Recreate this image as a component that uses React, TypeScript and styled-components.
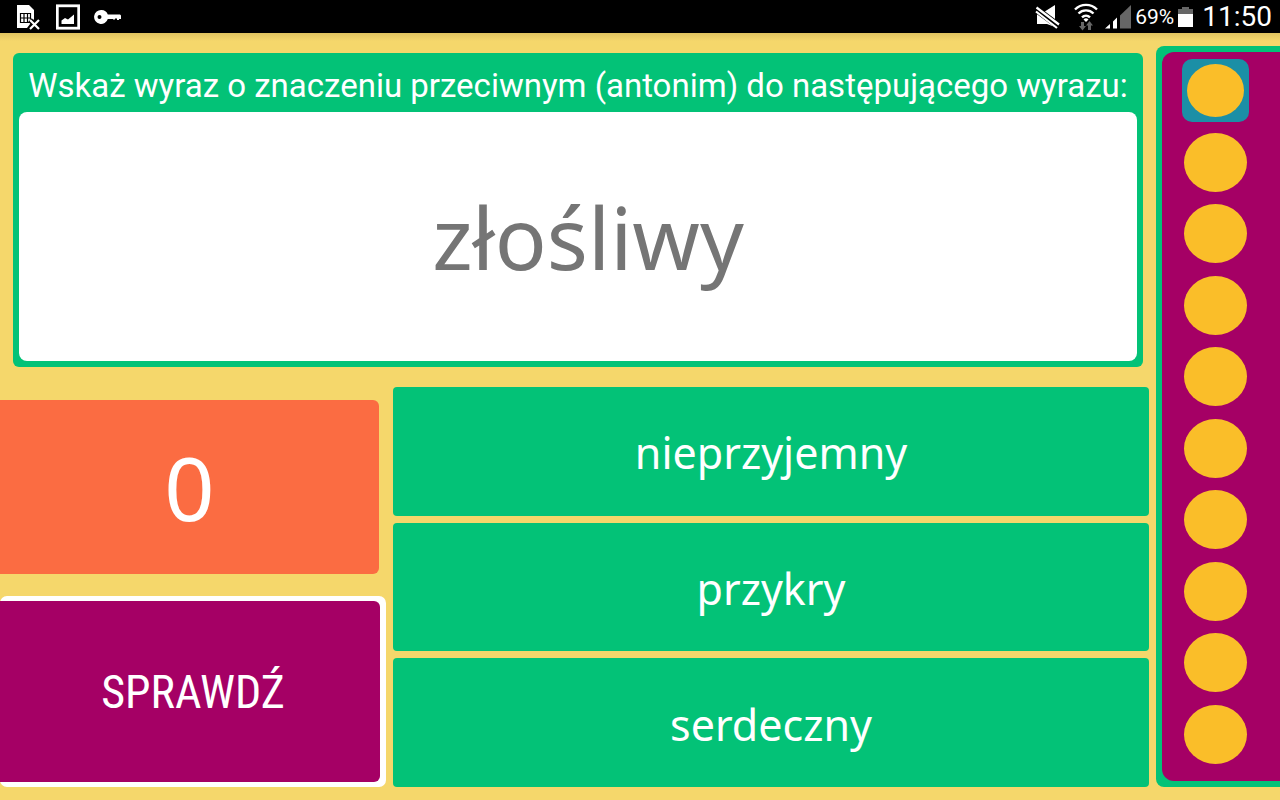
import React from "react";
import styled, { createGlobalStyle } from "styled-components";

const color = {
  sand: "#f5d76b",
  green: "#03c277",
  purple: "#a50065",
  orange: "#fb6c42",
  amber: "#fabe29",
  teal: "#1b8fa6",
  white: "#ffffff",
};

const wordFont = `"Noto Sans", "Open Sans", sans-serif`;

const GlobalStyle = createGlobalStyle`
  *, *::before, *::after { box-sizing: border-box; }
  body {
    margin: 0;
    background: ${color.sand};
    font-family: Roboto, sans-serif;
  }
  button { font: inherit; border: 0; padding: 0; cursor: pointer; }
`;

const Screen = styled.div`
  display: flex;
  flex-direction: column;
  min-height: 100vh;
`;

const StatusBar = styled.header`
  display: flex;
  align-items: center;
  justify-content: space-between;
  height: 33px;
  padding: 0 8px 0 16px;
  background: #000;
  color: ${color.white};
`;

const Notifications = styled.div`
  display: flex;
  align-items: center;
  gap: 14px;
`;

const Indicators = styled.div`
  display: flex;
  align-items: center;
`;

const Icon = styled.svg<{ $gap?: number }>`
  display: block;
  flex: none;
  margin-right: ${(p) => p.$gap ?? 0}px;
`;

const Charge = styled.span`
  margin-right: 4px;
  padding-top: 2px;
  font-size: 21px;
  line-height: 33px;
`;

const Clock = styled.time`
  font-size: 28px;
  line-height: 33px;
`;

const Game = styled.main`
  flex: 1;
  display: grid;
  grid-template-columns: minmax(0, 1fr) 124px;
  padding: 13px 0;
  background: linear-gradient(#dfc35f, ${color.sand} 8px);
`;

const Board = styled.div`
  display: grid;
  grid-template-columns: minmax(0, 1fr);
  grid-template-rows: 314fr 400fr;
  gap: 20px;
  padding-top: 7px;
`;

const Question = styled.section`
  display: flex;
  flex-direction: column;
  margin: 0 13px;
  padding: 6px;
  border-radius: 6px;
  background: ${color.green};
`;

const Prompt = styled.h1`
  margin: 0;
  min-height: 53px;
  color: ${color.white};
  font-size: 33px;
  font-weight: 400;
  line-height: 53px;
  text-align: center;
`;

const Word = styled.p`
  flex: 1;
  display: flex;
  align-items: center;
  justify-content: center;
  margin: 0;
  padding-left: 20px;
  border-radius: 8px;
  background: ${color.white};
  color: #757575;
  font-family: ${wordFont};
  font-size: 86px;
  line-height: 100px;
`;

const Controls = styled.div`
  display: grid;
  grid-template-columns: 386fr 756fr;
  gap: 7px;
  padding-right: 7px;
`;

const Side = styled.div`
  display: grid;
  grid-template-rows: 174fr 191fr;
  gap: 22px;
  padding-top: 13px;
`;

const Score = styled.output`
  display: flex;
  align-items: center;
  justify-content: center;
  margin-right: 7px;
  border-radius: 0 6px 6px 0;
  background: ${color.orange};
  color: ${color.white};
  font-family: ${wordFont};
  font-size: 88px;
  line-height: 100px;
`;

const CheckButton = styled.button`
  display: flex;
  padding: 5px 6px 5px 0;
  border-radius: 7px;
  background: ${color.white};
`;

const CheckLabel = styled.span`
  flex: 1;
  align-self: stretch;
  display: flex;
  align-items: center;
  justify-content: center;
  padding-left: 6px;
  border-radius: 0 6px 6px 0;
  background: ${color.purple};
  color: ${color.white};
  font-family: "Roboto Condensed", "Liberation Sans Narrow", sans-serif;
  font-size: 46px;
  line-height: 60px;
`;

const Answers = styled.div`
  display: grid;
  grid-auto-rows: 1fr;
  gap: 7px;
`;

const Answer = styled.button`
  border-radius: 4px;
  background: ${color.green};
  color: ${color.white};
  && {
    padding-top: 4px;
    font-family: ${wordFont};
    font-size: 43px;
    line-height: 60px;
  }
`;

const Track = styled.aside`
  display: flex;
  padding: 6px 0 6px 6px;
  border-radius: 8px 0 0 8px;
  background: ${color.green};
`;

const Rounds = styled.ol`
  flex: 1;
  display: flex;
  flex-direction: column;
  margin: 0;
  padding: 3px 11px 11px 0;
  border-radius: 12px 0 0 12px;
  background: ${color.purple};
  list-style: none;
`;

const Round = styled.li`
  flex: 1;
  display: flex;
  align-items: center;
  justify-content: center;
`;

const Dot = styled.span`
  width: 63px;
  height: 59px;
  border-radius: 50%;
  background: ${color.amber};
`;

const CurrentFrame = styled.span`
  display: flex;
  padding: 5px;
  border-radius: 10px;
  background: ${color.teal};

  ${Dot} {
    width: 57px;
    height: 53px;
  }
`;

const SimMissing = () => (
  <Icon width="26" height="26" viewBox="0 0 26 26" aria-hidden="true">
    <path d="M1 1h12l5 5v9l-7 9H1z" fill="#fff" />
    <path d="M4.500 9.500h10v9h-10zM4 14h11M8 9v10M11.500 9v10" fill="none" stroke="#000" strokeWidth="1.2" />
    <path d="M14 16l9 9M23 16l-9 9" stroke="#000" strokeWidth="5" />
    <path d="M14 16l9 9M23 16l-9 9" stroke="#fff" strokeWidth="2.2" />
  </Icon>
);

const Picture = () => (
  <Icon width="24" height="26" viewBox="0 0 24 26" aria-hidden="true">
    <rect x="1.3" y="1.8" width="21.4" height="22.4" fill="none" stroke="#fff" strokeWidth="2.8" />
    <path d="M5.500 20v-3.500l3.500-2.500 3 1.500 6-5V20z" fill="#fff" />
  </Icon>
);

const Key = () => (
  <Icon width="28" height="16" viewBox="0 0 28 16" aria-hidden="true">
    <path
      fillRule="evenodd"
      fill="#fff"
      d="M7.500 1a7 7 0 0 1 6.300 4.500H26l1 1v3.500h-2v1h-2v-1.500h-2v1h-2V10h-5.200A7 7 0 1 1 7.500 1zM5.500 6a2 2 0 1 0 0 4a2 2 0 0 0 0-4z"
    />
  </Icon>
);

const Muted = () => (
  <Icon $gap={13} width="26" height="26" viewBox="0 0 26 26" aria-hidden="true">
    <path d="M2 8h7l11-7v22l-8-3H2z" fill="#fff" />
    <path d="M0 4.300l24 18" stroke="#000" strokeWidth="7" />
    <path d="M1.500 3.500L24 20.500M1 7.500l21 16.500" stroke="#fff" strokeWidth="2.200" />
  </Icon>
);

const Wifi = () => (
  <Icon $gap={7} width="24" height="28" viewBox="0 0 24 28" aria-hidden="true">
    <path
      d="M1 6.500a15.500 15.500 0 0 1 22 0M4.500 10.500a10.600 10.600 0 0 1 15 0M8 14.300a5.800 5.800 0 0 1 8 0"
      fill="none"
      stroke="#fff"
      strokeWidth="2.400"
    />
    <path d="M9.500 16.500a3.600 3.600 0 0 1 5 0L12 19z" fill="#fff" />
    <path d="M7 19h3v4h2l-3.500 4.500L5 23h2zM14 27h3v-4.500h2L15.500 18 12 22.500h2z" fill="#666" />
  </Icon>
);

const Signal = () => (
  <Icon $gap={4} width="26" height="24" viewBox="0 0 26 24" aria-hidden="true">
    <path d="M0 23.500l5-4.500v4.500zM8 16.500l4-4v11H8z" fill="#fff" />
    <path d="M15 10.500L26 0v23.500H15z" fill="#666" />
  </Icon>
);

const Battery = () => (
  <Icon $gap={9} width="15" height="22" viewBox="0 0 15 22" aria-hidden="true">
    <path d="M4 1h7v2h4v6H0V3h4z" fill="#666" />
    <path d="M0 8h15v13H0z" fill="#fff" />
  </Icon>
);

const answers = ["nieprzyjemny", "przykry", "serdeczny"];
const rounds = Array.from({ length: 10 }, (_, i) => i);

export default function App() {
  return (
    <Screen>
      <GlobalStyle />
      <StatusBar>
        <Notifications>
          <SimMissing />
          <Picture />
          <Key />
        </Notifications>
        <Indicators>
          <Muted />
          <Wifi />
          <Signal />
          <Charge>69%</Charge>
          <Battery />
          <Clock>11:50</Clock>
        </Indicators>
      </StatusBar>
      <Game>
        <Board>
          <Question>
            <Prompt>Wskaż wyraz o znaczeniu przeciwnym (antonim) do następującego wyrazu:</Prompt>
            <Word>złośliwy</Word>
          </Question>
          <Controls>
            <Side>
              <Score>0</Score>
              <CheckButton type="button">
                <CheckLabel>SPRAWDŹ</CheckLabel>
              </CheckButton>
            </Side>
            <Answers>
              {answers.map((word) => (
                <Answer key={word} type="button">
                  {word}
                </Answer>
              ))}
            </Answers>
          </Controls>
        </Board>
        <Track>
          <Rounds>
            {rounds.map((n) => (
              <Round key={n}>
                {n === 0 ? (
                  <CurrentFrame>
                    <Dot />
                  </CurrentFrame>
                ) : (
                  <Dot />
                )}
              </Round>
            ))}
          </Rounds>
        </Track>
      </Game>
    </Screen>
  );
}
